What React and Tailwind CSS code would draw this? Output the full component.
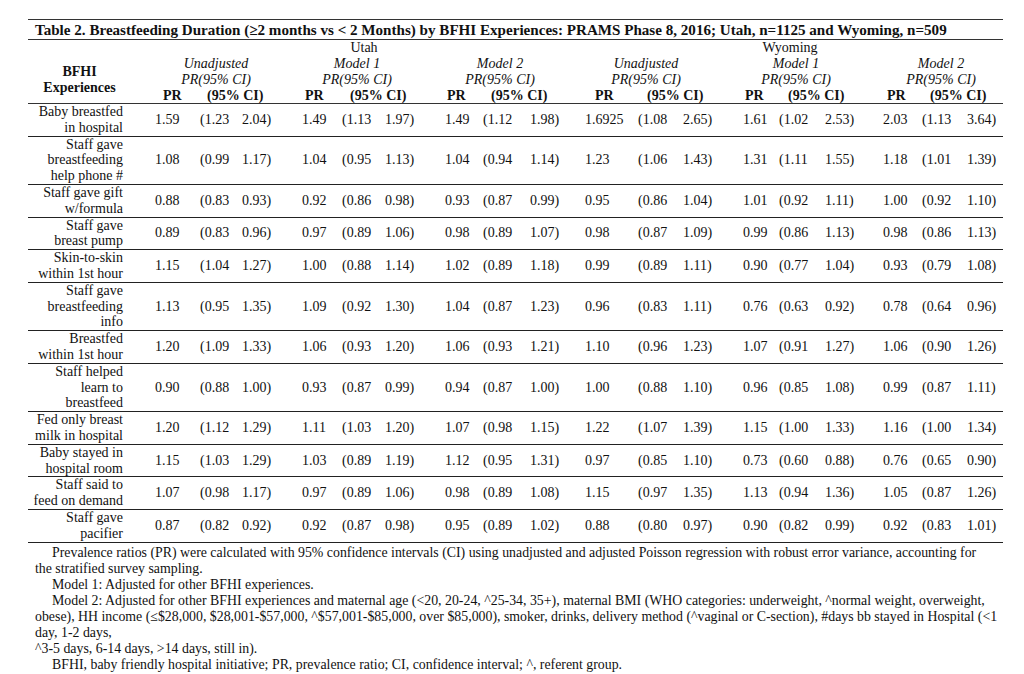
import React from 'react';

const rows = [
  { label: ['Baby breastfed', 'in hospital'], v: ['1.59', '(1.23', '2.04)', '1.49', '(1.13', '1.97)', '1.49', '(1.12', '1.98)', '1.6925', '(1.08', '2.65)', '1.61', '(1.02', '2.53)', '2.03', '(1.13', '3.64)'] },
  { label: ['Staff gave', 'breastfeeding', 'help phone #'], v: ['1.08', '(0.99', '1.17)', '1.04', '(0.95', '1.13)', '1.04', '(0.94', '1.14)', '1.23', '(1.06', '1.43)', '1.31', '(1.11', '1.55)', '1.18', '(1.01', '1.39)'] },
  { label: ['Staff gave gift', 'w/formula'], v: ['0.88', '(0.83', '0.93)', '0.92', '(0.86', '0.98)', '0.93', '(0.87', '0.99)', '0.95', '(0.86', '1.04)', '1.01', '(0.92', '1.11)', '1.00', '(0.92', '1.10)'] },
  { label: ['Staff gave', 'breast pump'], v: ['0.89', '(0.83', '0.96)', '0.97', '(0.89', '1.06)', '0.98', '(0.89', '1.07)', '0.98', '(0.87', '1.09)', '0.99', '(0.86', '1.13)', '0.98', '(0.86', '1.13)'] },
  { label: ['Skin-to-skin', 'within 1st hour'], v: ['1.15', '(1.04', '1.27)', '1.00', '(0.88', '1.14)', '1.02', '(0.89', '1.18)', '0.99', '(0.89', '1.11)', '0.90', '(0.77', '1.04)', '0.93', '(0.79', '1.08)'] },
  { label: ['Staff gave', 'breastfeeding', 'info'], v: ['1.13', '(0.95', '1.35)', '1.09', '(0.92', '1.30)', '1.04', '(0.87', '1.23)', '0.96', '(0.83', '1.11)', '0.76', '(0.63', '0.92)', '0.78', '(0.64', '0.96)'] },
  { label: ['Breastfed', 'within 1st hour'], v: ['1.20', '(1.09', '1.33)', '1.06', '(0.93', '1.20)', '1.06', '(0.93', '1.21)', '1.10', '(0.96', '1.23)', '1.07', '(0.91', '1.27)', '1.06', '(0.90', '1.26)'] },
  { label: ['Staff helped', 'learn to', 'breastfeed'], v: ['0.90', '(0.88', '1.00)', '0.93', '(0.87', '0.99)', '0.94', '(0.87', '1.00)', '1.00', '(0.88', '1.10)', '0.96', '(0.85', '1.08)', '0.99', '(0.87', '1.11)'] },
  { label: ['Fed only breast', 'milk in hospital'], v: ['1.20', '(1.12', '1.29)', '1.11', '(1.03', '1.20)', '1.07', '(0.98', '1.15)', '1.22', '(1.07', '1.39)', '1.15', '(1.00', '1.33)', '1.16', '(1.00', '1.34)'] },
  { label: ['Baby stayed in', 'hospital room'], v: ['1.15', '(1.03', '1.29)', '1.03', '(0.89', '1.19)', '1.12', '(0.95', '1.31)', '0.97', '(0.85', '1.10)', '0.73', '(0.60', '0.88)', '0.76', '(0.65', '0.90)'] },
  { label: ['Staff said to', 'feed on demand'], v: ['1.07', '(0.98', '1.17)', '0.97', '(0.89', '1.06)', '0.98', '(0.89', '1.08)', '1.15', '(0.97', '1.35)', '1.13', '(0.94', '1.36)', '1.05', '(0.87', '1.26)'] },
  { label: ['Staff gave', 'pacifier'], v: ['0.87', '(0.82', '0.92)', '0.92', '(0.87', '0.98)', '0.95', '(0.89', '1.02)', '0.88', '(0.80', '0.97)', '0.90', '(0.82', '0.99)', '0.92', '(0.83', '1.01)'] },
];

// widths of the 18 value cells (left edge of each number to the next)
const cellW = [
  'w-[45px]', 'w-[42px]', 'w-[60px]',
  'w-[40px]', 'w-[43px]', 'w-[60px]',
  'w-[38px]', 'w-[47px]', 'w-[55px]',
  'w-[53px]', 'w-[45px]', 'w-[60px]',
  'w-[36px]', 'w-[46px]', 'w-[58px]',
  'w-[39px]', 'w-[45px]', 'w-[36px]',
];

const groups = [
  { w: 'w-[170px]', name: 'Unadjusted' },
  { w: 'w-[112px]', name: 'Model 1' },
  { w: 'w-[174px]', name: 'Model 2' },
  { w: 'w-[118px]', name: 'Unadjusted' },
  { w: 'w-[182px]', name: 'Model 1' },
  { w: 'w-[108px]', name: 'Model 2' },
];

const subW = [
  ['w-[44px]', 'w-[98px]'],
  ['w-[45px]', 'w-[97px]'],
  ['w-[44px]', 'w-[104px]'],
  ['w-[52px]', 'w-[98px]'],
  ['w-[43px]', 'w-[99px]'],
  ['w-[43px]', 'w-[73px]'],
];

function App() {
  return (
    <div className="w-[1024px] h-[674px] bg-white text-[#111] font-['Liberation_Serif',serif] text-[14px] leading-[16px] overflow-hidden">
      <div className="ml-[28px] mt-[19px] w-[975px]">
        {/* Title */}
        <div className="border-t-[1.5px] border-b-[1.5px] border-[#333] h-[21px] pl-[7px] flex items-center font-bold text-[15.1px] whitespace-nowrap">
          Table 2. Breastfeeding Duration (≥2 months vs &lt; 2 Months) by BFHI Experiences: PRAMS Phase 8, 2016; Utah, n=1125 and Wyoming, n=509
        </div>

        {/* Header */}
        <div className="flex border-b-[1.5px] border-[#333] h-[64px]">
          <div className="w-[103px] shrink-0 pt-[24px] text-center font-bold">
            <div>BFHI</div>
            <div>Experiences</div>
          </div>
          <div className="flex-1 flex flex-col">
            <div className="flex">
              <div className="w-[444px] text-center pl-[22px]">Utah</div>
              <div className="w-[428px] text-center pl-[2px]">Wyoming</div>
            </div>
            <div className="flex italic">
              {groups.map((g, i) => (
                <div key={i} className={`${g.w} shrink-0 text-center`}>
                  <div>{g.name}</div>
                  <div>PR(95% CI)</div>
                </div>
              ))}
            </div>
            <div className="flex font-bold ml-[32px]">
              {subW.map((s, i) => (
                <React.Fragment key={i}>
                  <div className={`${s[0]} shrink-0`}>PR</div>
                  <div className={`${s[1]} shrink-0`}>(95% CI)</div>
                </React.Fragment>
              ))}
            </div>
          </div>
        </div>

        {/* Body */}
        {rows.map((r, i) => (
          <div key={i} className="flex items-center border-b border-[#222] leading-[15.8px]">
            <div className="w-[127px] shrink-0 pr-[32px] text-right whitespace-nowrap">
              {r.label.map((l, j) => (
                <div key={j}>{l}</div>
              ))}
            </div>
            {r.v.map((v, j) => (
              <div key={j} className={`${cellW[j]} shrink-0 whitespace-nowrap`}>{v}</div>
            ))}
          </div>
        ))}

        {/* Notes */}
        <div className="mt-[2px] whitespace-nowrap text-[13.85px] leading-[16px]">
          <div className="pl-[24px]">Prevalence ratios (PR) were calculated with 95% confidence intervals (CI) using unadjusted and adjusted Poisson regression with robust error variance, accounting for</div>
          <div className="pl-[7px]">the stratified survey sampling.</div>
          <div className="pl-[24px]">Model 1: Adjusted for other BFHI experiences.</div>
          <div className="pl-[24px]">Model 2: Adjusted for other BFHI experiences and maternal age (&lt;20, 20-24, ^25-34, 35+), maternal BMI (WHO categories: underweight, ^normal weight, overweight,</div>
          <div className="pl-[7px]">obese), HH income (≤$28,000, $28,001-$57,000, ^$57,001-$85,000, over $85,000), smoker, drinks, delivery method (^vaginal or C-section), #days bb stayed in Hospital (&lt;1</div>
          <div className="pl-[7px]">day, 1-2 days,</div>
          <div className="pl-[7px]">^3-5 days, 6-14 days, &gt;14 days, still in).</div>
          <div className="pl-[24px]">BFHI, baby friendly hospital initiative; PR, prevalence ratio; CI, confidence interval; ^, referent group.</div>
        </div>
      </div>
    </div>
  );
}

export default App;
